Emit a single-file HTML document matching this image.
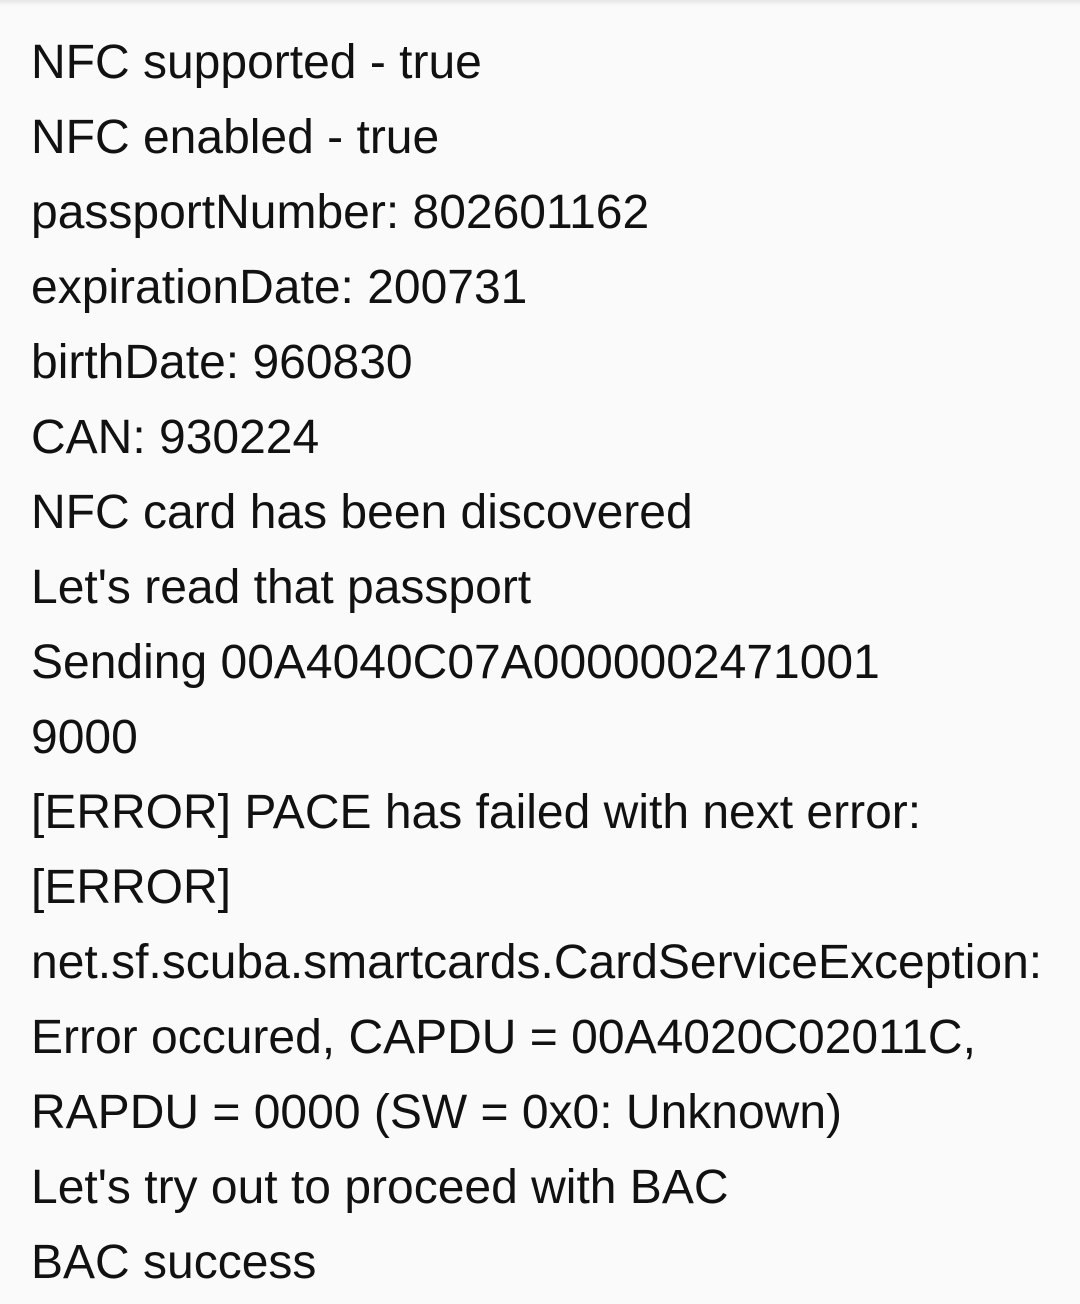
<!DOCTYPE html>
<html><head><meta charset="utf-8"><style>
html,body{margin:0;padding:0;width:1080px;height:1304px;overflow:hidden;background:#fafafa;}
.top{position:absolute;left:0;top:0;width:1080px;height:6px;background:linear-gradient(#e6e6e6,#fafafa);}
.t{position:absolute;left:31px;top:25px;font-family:"Liberation Sans",sans-serif;font-size:48px;line-height:75px;color:#111;white-space:pre;}
</style></head><body><div class="top"></div>
<div class="t">NFC supported - true
NFC enabled - true
passportNumber: 802601162
expirationDate: 200731
birthDate: 960830
CAN: 930224
NFC card has been discovered
Let's read that passport
Sending 00A4040C07A0000002471001
9000
[ERROR] PACE has failed with next error:
[ERROR]
net.sf.scuba.smartcards.CardServiceException:
Error occured, CAPDU = 00A4020C02011C,
RAPDU = 0000 (SW = 0x0: Unknown)
Let's try out to proceed with BAC
BAC success</div>
</body></html>
